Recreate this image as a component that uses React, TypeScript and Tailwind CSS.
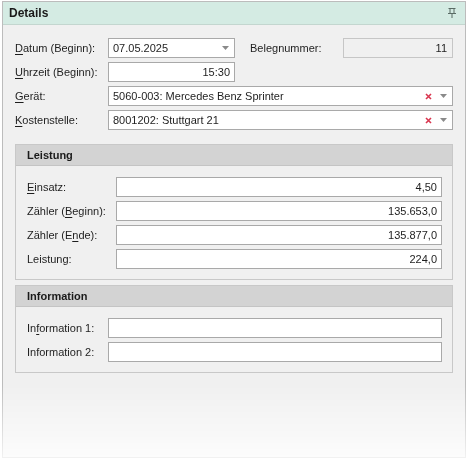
import type { ReactNode } from "react";

// small helper for the mnemonic underline in labels
function U({ children }: { children: ReactNode }) {
  return <span className="underline decoration-1 underline-offset-[2px]">{children}</span>;
}

function DropArrow() {
  return (
    <svg width="7" height="4" viewBox="0 0 7 4" className="shrink-0">
      <path d="M0 0H7L3.5 4Z" fill="#8a8a8a" />
    </svg>
  );
}

function ClearX() {
  return (
    <svg width="7" height="7" viewBox="0 0 7 7" className="shrink-0">
      <path d="M1 1L6 6M6 1L1 6" stroke="#d9364f" strokeWidth="1.6" />
    </svg>
  );
}

function PinIcon() {
  return (
    <svg width="8" height="10" viewBox="0 0 8 10">
      <path d="M0.5 0.5H7.5M2 0.5V5M6 0.5V5M0 5.5H8M4 5.5V10" stroke="#5a6b65" strokeWidth="1" fill="none" />
    </svg>
  );
}

function Field({
  value,
  align = "right",
  className = "",
  children,
}: {
  value?: string;
  align?: "left" | "right";
  className?: string;
  children?: ReactNode;
}) {
  return (
    <div
      className={`h-[20px] border border-[#a9a9a9] bg-white flex items-center px-[4px] ${className}`}
    >
      <span className={`flex-1 whitespace-nowrap overflow-hidden ${align === "right" ? "text-right" : "text-left"}`}>
        {value}
      </span>
      {children}
    </div>
  );
}

function Group({ title, children }: { title: string; children: ReactNode }) {
  return (
    <div className="border border-[#c8c8c8]">
      <div className="h-[21px] bg-[#d3d3d3] border-b border-[#c4c4c4] flex items-center pl-[11px] font-bold text-[#1a1a1a]">
        {title}
      </div>
      <div className="pt-[11px] pb-[10px] pl-[11px] pr-[10px] flex flex-col gap-[4px]">{children}</div>
    </div>
  );
}

export default function App() {
  return (
    <div
      className="w-[466px] h-[458px] bg-white pt-[1px] pl-[2px] text-[11px] text-[#1e1e1e]"
      style={{ fontFamily: '"Liberation Sans", Arial, sans-serif' }}
    >
      <div className="w-[464px] h-[457px] border border-[#bcbcbc] bg-[#f0f0f0] flex flex-col [mask-image:linear-gradient(to_bottom,black_84%,rgba(0,0,0,0.2)_100%)]">
        {/* Header */}
        <div className="h-[23px] shrink-0 bg-[#d4ebe3] border-b border-[#c3d6cf] flex items-center justify-between pl-[6px] pr-[9px]">
          <span className="font-bold text-[12px] text-[#1a1a1a]">Details</span>
          <PinIcon />
        </div>

        {/* Body */}
        <div className="pt-[13px] pl-[12px] pr-[12px] flex flex-col">
          <div className="flex flex-col gap-[4px]">
            <div className="flex items-center">
              <span className="w-[93px] shrink-0">
                <U>D</U>atum (Beginn):
              </span>
              <Field value="07.05.2025" align="left" className="w-[127px] pr-[5px]">
                <DropArrow />
              </Field>
              <span className="ml-[15px] w-[93px] shrink-0">Belegnummer:</span>
              <div className="h-[20px] flex-1 border border-[#c6c6c6] bg-[#f0f0f0] flex items-center justify-end px-[5px]">
                11
              </div>
            </div>
            <div className="flex items-center">
              <span className="w-[93px] shrink-0">
                <U>U</U>hrzeit (Beginn):
              </span>
              <Field value="15:30" className="w-[127px]" />
            </div>
            <div className="flex items-center">
              <span className="w-[93px] shrink-0">
                <U>G</U>erät:
              </span>
              <Field value="5060-003: Mercedes Benz Sprinter" align="left" className="flex-1 pr-[5px]">
                <span className="flex items-center gap-[8px] ml-[6px]">
                  <ClearX />
                  <DropArrow />
                </span>
              </Field>
            </div>
            <div className="flex items-center">
              <span className="w-[93px] shrink-0">
                <U>K</U>ostenstelle:
              </span>
              <Field value="8001202: Stuttgart 21" align="left" className="flex-1 pr-[5px]">
                <span className="flex items-center gap-[8px] ml-[6px]">
                  <ClearX />
                  <DropArrow />
                </span>
              </Field>
            </div>
          </div>

          <div className="mt-[14px]">
            <Group title="Leistung">
              <div className="flex items-center">
                <span className="w-[89px] shrink-0">
                  <U>E</U>insatz:
                </span>
                <Field value="4,50" className="flex-1" />
              </div>
              <div className="flex items-center">
                <span className="w-[89px] shrink-0">
                  Zähler (<U>B</U>eginn):
                </span>
                <Field value="135.653,0" className="flex-1" />
              </div>
              <div className="flex items-center">
                <span className="w-[89px] shrink-0">
                  Zähler (E<U>n</U>de):
                </span>
                <Field value="135.877,0" className="flex-1" />
              </div>
              <div className="flex items-center">
                <span className="w-[89px] shrink-0">Leistung:</span>
                <Field value="224,0" className="flex-1" />
              </div>
            </Group>
          </div>

          <div className="mt-[5px]">
            <Group title="Information">
              <div className="flex items-center">
                <span className="w-[81px] shrink-0">
                  In<U>f</U>ormation 1:
                </span>
                <Field className="flex-1" />
              </div>
              <div className="flex items-center">
                <span className="w-[81px] shrink-0">Information 2:</span>
                <Field className="flex-1" />
              </div>
            </Group>
          </div>
        </div>
      </div>
    </div>
  );
}
